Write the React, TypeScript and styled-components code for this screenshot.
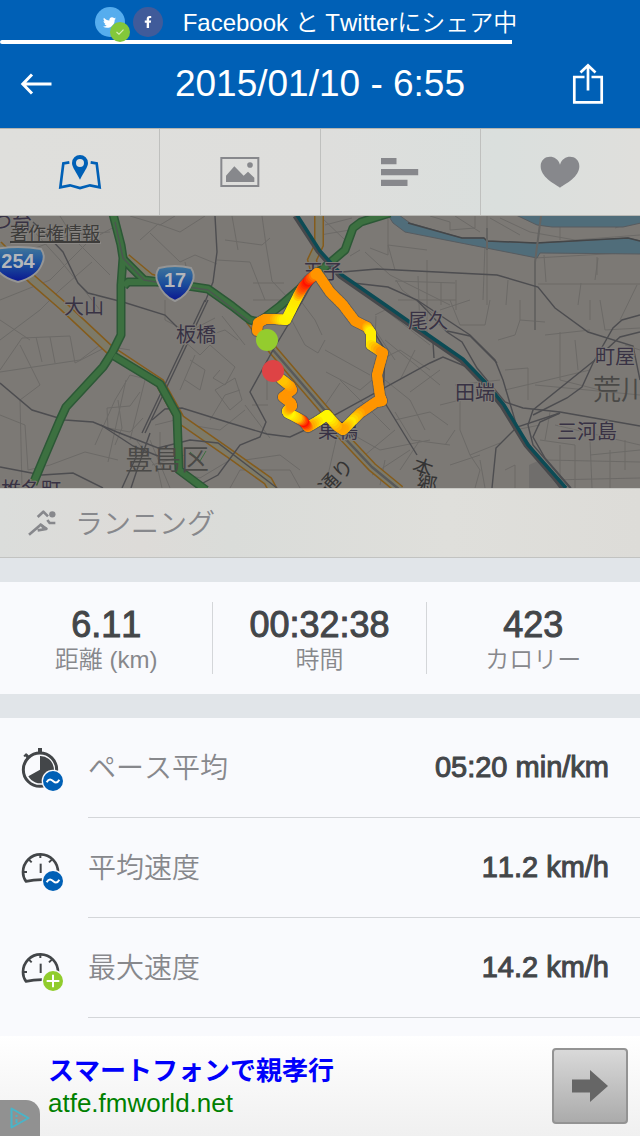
import React from "react";
import styled, { createGlobalStyle } from "styled-components";
import { FaFacebookF, FaTwitter } from "react-icons/fa";

const GlobalStyle = createGlobalStyle`
  *, *::before, *::after { box-sizing: border-box; }
  body {
    margin: 0;
    background: #e1e5e9;
    font-family: "Liberation Sans", "Noto Sans CJK JP", sans-serif;
    font-kerning: none;
    color: #434649;
  }
  button { font: inherit; color: inherit; border: 0; padding: 0; background: none; cursor: pointer; }
  h1, dl, dd, dt, p { margin: 0; font-weight: inherit; }
  svg { display: block; }
`;

const BLUE = "#0060b6";
const GREY = "#87888c";
const LIGHT = 350;

const Page = styled.div`
  display: flex;
  flex-direction: column;
  min-height: 100vh;
`;

/* Header */

const Header = styled.header`
  background: ${BLUE};
  color: #fff;
`;

const ShareStatus = styled.div`
  display: flex;
  align-items: center;
  justify-content: center;
  height: 40px;
  padding: 4px 28px 0 0;
  font-size: 24px;
  font-weight: ${LIGHT};
  line-height: 36px;
  white-space: nowrap;
`;

const Social = styled.span<{ $color: string }>`
  position: relative;
  display: flex;
  align-items: center;
  justify-content: center;
  width: 30px;
  height: 30px;
  margin-right: 8px;
  border-radius: 50%;
  background: ${(p) => p.$color};
`;

const DoneBadge = styled.span`
  position: absolute;
  right: -5px;
  bottom: -5px;
  display: flex;
  align-items: center;
  justify-content: center;
  width: 20px;
  height: 20px;
  border-radius: 50%;
  background: #83c83a;
`;

const StatusText = styled.span`
  padding: 2px 0 0 12px;
`;

const Progress = styled.div<{ $value: number }>`
  width: ${(p) => p.$value}%;
  height: 4px;
  border-radius: 2px 0 0 2px;
  background: #fff;
`;

const TitleBar = styled.div`
  display: flex;
  align-items: center;
  justify-content: space-between;
  height: 84px;
  padding: 0 36px 4px 20px;
`;

const Title = styled.h1`
  font-size: 37px;
  line-height: 44px;
  padding-left: 16px;
`;

/* Tabs */

const Tabs = styled.nav`
  display: flex;
  height: 88px;
  border-top: 1px solid #b4b4b0;
  border-bottom: 1px solid #b9b9b5;
  background: linear-gradient(90deg, #dfdfdc, #dededc 50%, #dadfdd 78%, #dfdfdc);
`;

const Tab = styled.button`
  flex: 1;
  display: flex;
  align-items: center;
  justify-content: center;
  border-right: 1px solid #bfc0be;
  &:last-child { border-right: 0; }
`;

/* Map */

const MapPanel = styled.section`
  position: relative;
  height: 272px;
  overflow: hidden;
  background: #7c7975;
`;

const Copyright = styled.a`
  position: absolute;
  left: 10px;
  top: 5px;
  font-size: 18px;
  line-height: 26px;
  color: #3d3c3a;
  text-decoration: underline;
  text-decoration-thickness: 2px;
  text-shadow: 1px 1px 0 #8b8885;
`;

const Activity = styled.section`
  display: flex;
  align-items: center;
  height: 70px;
  padding-left: 27px;
  border-top: 1px solid #c8c8c4;
  border-bottom: 1px solid #c2c3c1;
  background: linear-gradient(90deg, #dbdddb, #dddbd8 22%, #dadcd9 36%, #dfdfdb 70%, #dddcd8);
  color: ${GREY};
  gap: 18px;
`;

const ActivityName = styled.span`
  padding-top: 4px;
  font-size: 28px;
  font-weight: ${LIGHT};
  line-height: 40px;
`;

/* Summary */

const Summary = styled.dl`
  display: grid;
  grid-template-columns: repeat(3, 1fr);
  margin: 24px 0;
  padding: 20px 0;
  background: #f9fafd;
`;

const Stat = styled.div`
  display: flex;
  flex-direction: column-reverse;
  justify-content: flex-end;
  height: 72px;
  text-align: center;
  border-right: 1px solid #d4d6d9;
  &:last-child { border-right: 0; }
`;

const StatValue = styled.dd`
  font-size: 36px;
  line-height: 46px;
  -webkit-text-stroke: 1px currentColor;
`;

const StatLabel = styled.dt`
  font-size: 24px;
  font-weight: ${LIGHT};
  line-height: 24px;
  color: ${GREY};
`;

/* Details */

const Details = styled.dl`
  flex: 1;
  padding-bottom: 18px;
  background: #f9fafd;
`;

const Row = styled.div`
  display: flex;
  align-items: center;
  height: 100px;
  padding-left: 20px;
`;

const RowBody = styled.div`
  flex: 1;
  display: flex;
  align-items: center;
  justify-content: space-between;
  height: 100px;
  margin-left: 20px;
  padding-right: 31px;
  border-bottom: 1px solid #d4d6d9;
`;

const RowLabel = styled.dt`
  padding-bottom: 4px;
  font-size: 28px;
  font-weight: ${LIGHT};
  color: ${GREY};
`;

const RowValue = styled.dd`
  font-size: 29px;
  -webkit-text-stroke: 1px currentColor;
`;

/* Ad */

const Ad = styled.aside`
  position: relative;
  display: flex;
  align-items: center;
  justify-content: space-between;
  height: 100px;
  padding: 0 12px 0 48px;
  background: linear-gradient(#fff, #f0f0f0);
`;

const AdLink = styled.a`
  display: flex;
  flex-direction: column;
  padding-top: 2px;
  text-decoration: none;
  font-size: 26px;
  line-height: 32px;
  color: #008000;
`;

const AdTitle = styled.strong`
  font-weight: 700;
  color: #0000fb;
`;

const AdButton = styled.button`
  display: flex;
  align-items: center;
  justify-content: center;
  width: 76px;
  height: 76px;
  border: 2px solid #939393;
  border-radius: 4px;
  background: linear-gradient(#d9d9d9, #ababab);
`;

const AdChoices = styled.button`
  position: absolute;
  left: 0;
  bottom: 0;
  width: 40px;
  height: 36px;
  padding-left: 9px;
  border-radius: 0 14px 0 0;
  background: #919191;
`;

/* Icons */

const BackIcon = () => (
  <svg width="32" height="22" viewBox="0 0 32 22" fill="none" stroke="#fff" strokeWidth="3">
    <path d="M12 1.5 2.8 11 12 20.5M3 11h28.500" />
  </svg>
);

const ShareIcon = () => (
  <svg width="32" height="42" viewBox="0 0 32 42" fill="none" stroke="#fff" strokeWidth="2.700">
    <path d="M12.500 14H2.300v25.300h27.400V14H19.500M16 27.500V3M8.500 9.500 16 2.300l7.500 7.200" />
  </svg>
);

const MapIcon = () => (
  <svg width="44" height="36" viewBox="174 82 132 108">
    <path
      d="M208 107 190 110 181 182 210 176 240 184 270 176 299 182 290 110 272 107"
      fill="none"
      stroke={BLUE}
      strokeWidth="8"
    />
    <path
      fill={BLUE}
      fillRule="evenodd"
      d="M240 85a24 24 0 0 1 24 24c0 13-13 27-24 50-11-23-24-37-24-50a24 24 0 0 1 24-24zm0 12a12 12 0 1 0 0 24 12 12 0 0 0 0-24z"
    />
  </svg>
);

const PhotoIcon = () => (
  <svg width="40" height="32" viewBox="660 93 120 96" fill={GREY}>
    <rect x="664" y="99" width="111" height="84" fill="none" stroke={GREY} strokeWidth="6" />
    <circle cx="750" cy="120" r="8.500" />
    <path d="M678 171v-19l25-28 28 28 13-12 19 18v13z" />
  </svg>
);

const BarsIcon = () => (
  <svg width="38" height="28" viewBox="0 0 38 28" fill={GREY}>
    <path d="M0 0h15.500v6.300H0zM0 11h37.200v6.300H0zM0 21.700h26.500V28H0z" />
  </svg>
);

const HeartIcon = () => (
  <svg width="40" height="32" viewBox="660 92 120 96" fill={GREY}>
    <path d="M720 187c-18-12-58-32-58-64 0-35 48-39 58-5 10-34 58-30 58 5 0 32-40 52-58 64z" />
  </svg>
);

const RunnerIcon = () => (
  <svg width="30" height="28" viewBox="80 94 90 84" fill="none" stroke={GREY} strokeWidth="8" strokeLinejoin="round">
    <circle cx="156" cy="110" r="9.500" fill={GREY} stroke="none" />
    <path d="M112 118 129 102 143 116M141 127 148 136H165M86 171 121 141 138 154 112 158" />
    <path d="M118 136 143 152 128 158z" fill={GREY} stroke="none" />
  </svg>
);

type BadgeKind = "average" | "max";

const MetricBadge = ({ kind }: { kind: BadgeKind }) => (
  <g>
    <circle cx="159" cy="153" r="34" fill="#f9fafd" stroke="none" />
    <circle cx="159" cy="153" r="30" fill={kind === "average" ? BLUE : "#91cc2d"} stroke="none" />
    <path
      d={kind === "average" ? "M140 157C148 143 154 149 159 153S170 163 178 149" : "M159 134v38M140 153h38"}
      fill="none"
      stroke="#fff"
      strokeWidth="6"
    />
  </g>
);

const StopwatchIcon = () => (
  <svg width="48" height="48" viewBox="60 42 144 144" fill="#434649">
    <circle cx="120" cy="119" r="50" fill="none" stroke="#434649" strokeWidth="9" />
    <path d="M114 54h12v14h-12zM74 77l7-6 9 9-7 7z" />
    <path d="M72 79 80 71" stroke="#434649" strokeWidth="5" />
    <path d="M120 78a41 41 0 1 1-35 61l35-20z" />
    <MetricBadge kind="average" />
  </svg>
);

const GaugeIcon = ({ kind }: { kind: BadgeKind }) => (
  <svg width="48" height="48" viewBox="60 42 144 144" fill="none" stroke="#434649">
    <path d="M174 127A52 53 0 0 0 69 126Q69 142 78 154Q100 150 126 149" strokeWidth="8" />
    <path d="M121 72v12M71 126h10M162 126h10M86 88l9 9M156 88l-9 9" strokeWidth="6" />
    <path d="M122 101v28" strokeWidth="6" />
    <MetricBadge kind={kind} />
  </svg>
);

/* Map drawing: all coordinates are in the viewBox of CityMap */

const streets = [
  "M0 340 40 310 60 290 92 262M0 300 50 280 90 240 118 225M20 216 60 260 100 310M60 216 75 240 110 275M30 250 70 235 110 232",
  "M130 216 160 225 175 216M140 240 158 224 180 232 205 216M150 233 180 262 195 255 217 264M165 300 165 320 188 332 215 318M185 262 188 275 180 282",
  "M217 260 250 262 265 300M225 240 262 245 270 238M232 216 238 250M262 216 266 245 272 281 290 300M253 283 284 283M253 300 285 300",
  "M0 370 22 338 70 336 75 363 110 345M36 337 42 362M50 337 55 363M0 372 80 360 100 345 130 350",
  "M20 345 40 385 20 400 22 488M0 415 25 425 28 470 50 465 85 452 118 460M95 445 115 400 130 375 150 380",
  "M107 408 130 406 140 392M107 408 108 428 130 432 143 418M118 400 122 428 115 445M126 380 108 462M145 380 130 440",
  "M137 441 158 470 162 488M150 440 170 488M152 465 185 455M155 425 175 420M190 425 220 430 245 410M160 432 160 450",
  "M183 340 200 355 210 345 235 367 225 385 213 378 220 370M185 380 200 390 205 370 190 360M215 390 235 378 242 400 230 410 215 390",
  "M200 338 225 330 238 340M222 316 245 345M195 355 180 390M210 420 225 395 240 390M245 405 270 438M267 360 267 400M252 405 268 405",
  "M281 300 305 345 318 353 325 340M300 300 315 320 322 335M326 372 360 390 372 380M340 383 315 420M372 325 395 360M325 350 370 375",
  "M388 216 388 255 370 248M388 245 427 250M427 260 427 340M388 245 395 270M365 252 390 275 450 305M455 216 480 232M487 216 487 305",
  "M396 280 402 290 435 315M395 281 455 283M398 300 456 300M418 276 420 330M441 282 441 305M456 280 456 310M485 245 483 300",
  "M508 280 506 305M535 258 640 252M544 255 546 282M597 257 597 275M581 283 578 305M598 258 595 280M538 284 640 284M637 285 620 320",
  "M500 218 530 232 575 240 640 235M430 216 450 222 450 230 475 228 475 216M490 218 520 235M560 240 560 216M615 228 640 220",
  "M350 256 360 250M320 235 350 230M322 218 345 240M325 225 352 218",
  "M375 315 385 310 430 345M376 316 375 340M380 360 400 350 430 370M385 340 440 385M400 380 415 350M410 392 440 370M385 380 410 400",
  "M395 420 430 412 448 425M395 412 412 440 450 445M440 405 460 400 460 430 470 455 500 443M445 445 455 430M410 400 425 430",
  "M350 433 380 450 430 440M365 455 395 430M372 475 410 450M380 485 385 460M400 470 420 440M336 440 325 488M340 380 390 430",
  "M450 300 460 325 485 325 490 300M498 340 515 335 520 320 545 322M505 370 528 368 528 400M505 390 590 370M515 430 540 425M520 320 520 300",
  "M560 332 560 380 600 390M545 335 590 330M575 340 578 370M535 385 640 395M550 412 545 440M600 300 605 330 640 328",
  "M540 440 575 445 575 488M545 460 640 462M560 445 560 488M590 440 592 488M610 450 610 488M625 440 625 470M550 480 640 478M555 425 640 445",
  "M230 488 240 470 290 470 300 488M245 460 280 455 300 470M170 470 200 478 230 460M0 320 30 340M480 460 485 488M450 465 480 455",
  "M505 470 515 465 515 488M470 455 480 470 475 488M590 455 640 450M440 310 470 300M455 385 500 380M590 300 590 320M625 345 640 350",
];

const rails = [
  "M33 222 47 235 63 252 78 283 88 293 123 302 165 315 177 327",
  "M0 383 32 410 65 420 93 422 117 432 158 448 190 440 218 443 277 488",
  "M101 425 133 446 158 456",
  "M205 300 142 433M208 300 145 433",
  "M215 216 217 252 213 282 205 302",
  "M122 488 137 455M131 488 137 470 150 433",
  "M152 420 165 409 182 408 230 423 267 434 290 437 320 423 430 363 443 357 467 367",
  "M317 275 303 300 273 350 250 392 266 422 260 437 240 445 218 475 203 483",
  "M0 467 42 475 73 473 103 488",
  "M342 272 377 269 497 275 538 287 555 308 588 332 633 346 640 380",
  "M340 275 353 283 388 287 417 300 447 332 462 342 477 368 505 402 523 408 560 412 640 426",
  "M417 300 470 335 495 360 503 380 517 427 560 488",
  "M447 331 470 336 497 363",
  "M385 403 417 455",
  "M492 488 496 448 517 427 560 413",
  "M595 360 533 410 528 425 533 445 570 488",
  "M640 315 622 320 613 328 593 363 582 387 567 398 533 415",
  "M640 332 620 337 595 360",
  "M433 342 434 358",
  "M373 330 385 350 383 403",
  "M560 413 540 422 533 437 545 458 571 488",
];

const avenues = [
  "M-2 245 33 280 63 306 110 350 160 383 180 419 233 456 268 481 274 492",
  "M250 320 273 350 327 413 340 433 372 467 400 490",
  "M126 258 150 278 170 284",
  "M319 216 319 245 312 260 316 275",
];

const greenRoads = [
  "M113 214 121 245 123 258 121 285 121 335 112 353 103 367 66 407 60 420 43 460 33 484",
  "M123 259 144 280 168 283 208 289 232 306 250 320 259 322 280 306 318 273 345 250 353 228 361 222 390 213",
  "M124 286 128 282 160 282",
  "M114 356 160 384 177 415 179 470 206 490",
];

const labels = [
  { text: "つ台", x: -8, y: 229 },
  { text: "大山", x: 64, y: 314 },
  { text: "板橋", x: 176, y: 342 },
  { text: "王子", x: 303, y: 279 },
  { text: "尾久", x: 408, y: 328 },
  { text: "田端", x: 455, y: 400 },
  { text: "町屋", x: 595, y: 364 },
  { text: "三河島", x: 557, y: 439 },
  { text: "巣鴨", x: 318, y: 438 },
  { text: "椎名町", x: 1, y: 497 },
];

type RoutePoint = [number, number, number];

/* Third value: hue, from 0 (fast, red) through 35 (orange) to 60 (yellow) */
const route: RoutePoint[] = [
  [257, 331, 35], [258, 323, 35], [265, 319, 35], [275, 319, 38], [286, 320, 56],
  [292, 308, 58], [298, 296, 54], [303, 287, 22], [309, 280, 4], [317, 273, 35],
  [330, 292, 35], [343, 305, 35], [355, 321, 35], [367, 327, 35], [371, 333, 56],
  [371, 345, 56], [383, 353, 35], [377, 375, 35], [380, 396, 35], [382, 401, 35],
  [376, 402, 35], [360, 413, 35], [349, 424, 54], [343, 430, 40], [337, 426, 38],
  [327, 415, 58], [318, 421, 58], [308, 427, 40], [303, 421, 4], [296, 417, 46],
  [288, 413, 58], [287, 411, 54], [292, 406, 36], [291, 403, 35], [283, 397, 35],
  [292, 390, 35], [290, 386, 35], [281, 379, 46],
];

const STEPS = 5;

const RouteLine = () => (
  <g fill="none" strokeLinecap="round" strokeLinejoin="round">
    <path
      d={"M" + route.map(([x, y]) => `${x} ${y}`).join("L")}
      stroke="#4a4842"
      strokeOpacity="0.500"
      strokeWidth="12"
    />
    {route.slice(1).flatMap(([x, y, hue], i) => {
      const [px, py, phue] = route[i];
      return Array.from({ length: STEPS }, (_, k) => {
        const a = k / STEPS;
        const b = (k + 1) / STEPS;
        return (
          <line
            key={`${i}-${k}`}
            x1={px + (x - px) * a}
            y1={py + (y - py) * a}
            x2={px + (x - px) * b}
            y2={py + (y - py) * b}
            stroke={`hsl(${phue + (hue - phue) * b} 100% 50%)`}
            strokeWidth="10"
          />
        );
      });
    })}
  </g>
);

const Shield = ({ x, y, wide, children }: { x: number; y: number; wide?: boolean; children: string }) => {
  const w = wide ? 27 : 20;
  return (
    <g>
      <path
        d={`M${x - w + 4} ${y - 15}Q${x} ${y - 19} ${x + w - 4} ${y - 15}Q${x + w + 1} ${y - 8} ${x + w - 3} ${y}Q${x + w - 8} ${y + 13} ${x} ${y + 18}Q${x - w + 8} ${y + 13} ${x - w + 3} ${y}Q${x - w - 1} ${y - 8} ${x - w + 4} ${y - 15}Z`}
        fill="url(#shield)"
        stroke="#959595"
        strokeWidth="2"
      />
      <text x={x} y={y + 4} textAnchor="middle" fontSize="20" fontWeight="700" fill="#b4b6ba">
        {children}
      </text>
    </g>
  );
};

const CityMap = () => (
  <svg width="100%" height="100%" viewBox="0 216 640 272" preserveAspectRatio="xMidYMid slice" aria-label="ランニングコースの地図">
    <defs>
      <linearGradient id="shield" x1="0" y1="0" x2="0" y2="1">
        <stop offset="0" stopColor="#40769c" />
        <stop offset="0.500" stopColor="#1c4f9c" />
        <stop offset="1" stopColor="#0a1590" />
      </linearGradient>
    </defs>
    <rect y="216" width="640" height="272" fill="#7c7975" />
    <path d="M529 488V465L540 460 565 488Z" fill="#706e6c" />
    <g fill="none" stroke="#6c6a67" strokeWidth="1">
      {streets.map((d) => <path key={d} d={d} />)}
    </g>
    <g fill="#506d7a" stroke="#585c60" strokeWidth="1">
      <path d="M388 215H399L410 223 462 238H484L487 241 536 243 628 238 641 241V254L540 253 537 258 405 232 393 223Z" />
      <path d="M516 215 537 225 552 227H623L641 223V215Z" />
    </g>
    <path d="M408 223 462 238H484L487 241 536 243 628 238 640 241" fill="none" stroke="#444648" strokeWidth="1.500" />
    <path d="M541 216 535 262 535 330M487 228 487 250" fill="none" stroke="#656462" strokeWidth="2" />
    <g fill="none">
      {avenues.map((d) => <path key={d} d={d} stroke="#855c1c" strokeWidth="10" />)}
      {avenues.map((d) => <path key={d} d={d} stroke="#7d7a68" strokeWidth="7" />)}
      <path d="M250 320 273 350 327 413 340 433 372 467 400 490" stroke="#58595a" strokeWidth="2.500" />
    </g>
    <g fill="none" stroke="#4d4d50" strokeWidth="1.400">
      {rails.map((d) => <path key={d} d={d} />)}
    </g>
    <g fill="none" strokeLinejoin="round">
      {greenRoads.map((d) => <path key={d} d={d} stroke="#2c5836" strokeWidth="9" />)}
      {greenRoads.map((d) => <path key={d} d={d} stroke="#3c7040" strokeWidth="6" />)}
      <path d="M115 222 123 258 144 280 168 284 208 290 250 322" stroke="#4c5650" strokeWidth="1.500" />
      <path d="M190 452 200 461 206 451" stroke="#3c7040" />
    </g>
    <g fill="none">
      <path d="M295 216 318 251 340 276 383 306 433 341 462 361 485 385 502 406 526 445 565 490" stroke="#47484b" strokeWidth="5" />
      <path d="M297 215 320 251 342 275 384 304 434 339 463 359 487 384 504 405 528 445 566 488" stroke="#0c4b55" strokeWidth="3.500" />
    </g>
    <g fontFamily='"Noto Sans CJK JP", sans-serif'>
      <g fill="#4a4947" fontSize="28" fontWeight={LIGHT}>
        <text x="125" y="470">豊島区</text>
        <text x="593" y="400">荒川</text>
      </g>
      <g fontSize="20" fill="#383244" stroke="#7f7c78" strokeWidth="2" paintOrder="stroke">
        {labels.map((l) => (
          <text key={l.text} x={l.x} y={l.y}>{l.text}</text>
        ))}
      </g>
      <g fontSize="20" fill="#343434">
        <text transform="translate(328 496) rotate(-48)">通り</text>
        <text transform="translate(411 471) rotate(20)">本</text>
        <text transform="translate(416 490) rotate(8)">郷</text>
      </g>
    </g>
    <Shield x={18} y={264} wide>254</Shield>
    <Shield x={175} y={283}>17</Shield>
    <RouteLine />
    <circle cx="267" cy="340" r="11" fill="#94cc2e" />
    <circle cx="273" cy="371" r="11" fill="#de4345" />
  </svg>
);

const metrics = [
  { label: "ペース平均", value: "05:20 min/km", icon: <StopwatchIcon /> },
  { label: "平均速度", value: "11.2 km/h", icon: <GaugeIcon kind="average" /> },
  { label: "最大速度", value: "14.2 km/h", icon: <GaugeIcon kind="max" /> },
];

const summary = [
  { label: "距離 (km)", value: "6.11" },
  { label: "時間", value: "00:32:38" },
  { label: "カロリー", value: "423" },
];

export default function App() {
  return (
    <Page>
      <GlobalStyle />
      <Header>
        <ShareStatus>
          <Social $color="#56adee">
            <FaTwitter size={13} />
            <DoneBadge>
              <svg width="8" height="6" viewBox="0 0 8 6" fill="none" stroke="#d5efb5" strokeWidth="1.200">
                <path d="M0.500 3 3 5.200 7.500 0.600" />
              </svg>
            </DoneBadge>
          </Social>
          <Social $color="#405b9a">
            <FaFacebookF size={12} />
          </Social>
          <StatusText>Facebook と Twitterにシェア中</StatusText>
        </ShareStatus>
        <Progress role="progressbar" aria-label="シェアの進行状況" aria-valuenow={80} $value={80} />
        <TitleBar>
          <button aria-label="戻る"><BackIcon /></button>
          <Title>2015/01/10 - 6:55</Title>
          <button aria-label="共有"><ShareIcon /></button>
        </TitleBar>
      </Header>
      <Tabs>
        <Tab aria-label="地図"><MapIcon /></Tab>
        <Tab aria-label="写真"><PhotoIcon /></Tab>
        <Tab aria-label="グラフ"><BarsIcon /></Tab>
        <Tab aria-label="心拍数"><HeartIcon /></Tab>
      </Tabs>
      <MapPanel>
        <CityMap />
        <Copyright href="#legal">著作権情報</Copyright>
      </MapPanel>
      <Activity>
        <RunnerIcon />
        <ActivityName>ランニング</ActivityName>
      </Activity>
      <Summary>
        {summary.map((s) => (
          <Stat key={s.label}>
            <StatLabel>{s.label}</StatLabel>
            <StatValue>{s.value}</StatValue>
          </Stat>
        ))}
      </Summary>
      <Details>
        {metrics.map((m) => (
          <Row key={m.label}>
            {m.icon}
            <RowBody>
              <RowLabel>{m.label}</RowLabel>
              <RowValue>{m.value}</RowValue>
            </RowBody>
          </Row>
        ))}
      </Details>
      <Ad>
        <AdLink href="#ad">
          <AdTitle>スマートフォンで親孝行</AdTitle>
          <span>atfe.fmworld.net</span>
        </AdLink>
        <AdButton aria-label="広告を開く">
          <svg width="36" height="32" viewBox="0 0 36 32" fill="#666">
            <path d="M0 9.500h18V0l18 16-18 16v-9.500H0z" />
          </svg>
        </AdButton>
        <AdChoices aria-label="広告情報">
          <svg width="22" height="24" viewBox="0 0 22 24" fill="none" stroke="#49b5c9" strokeWidth="2" strokeLinejoin="round">
            <path d="M2.500 2.500v19l17-9.500zM7.500 9v2M7.500 13v4" />
          </svg>
        </AdChoices>
      </Ad>
    </Page>
  );
}
